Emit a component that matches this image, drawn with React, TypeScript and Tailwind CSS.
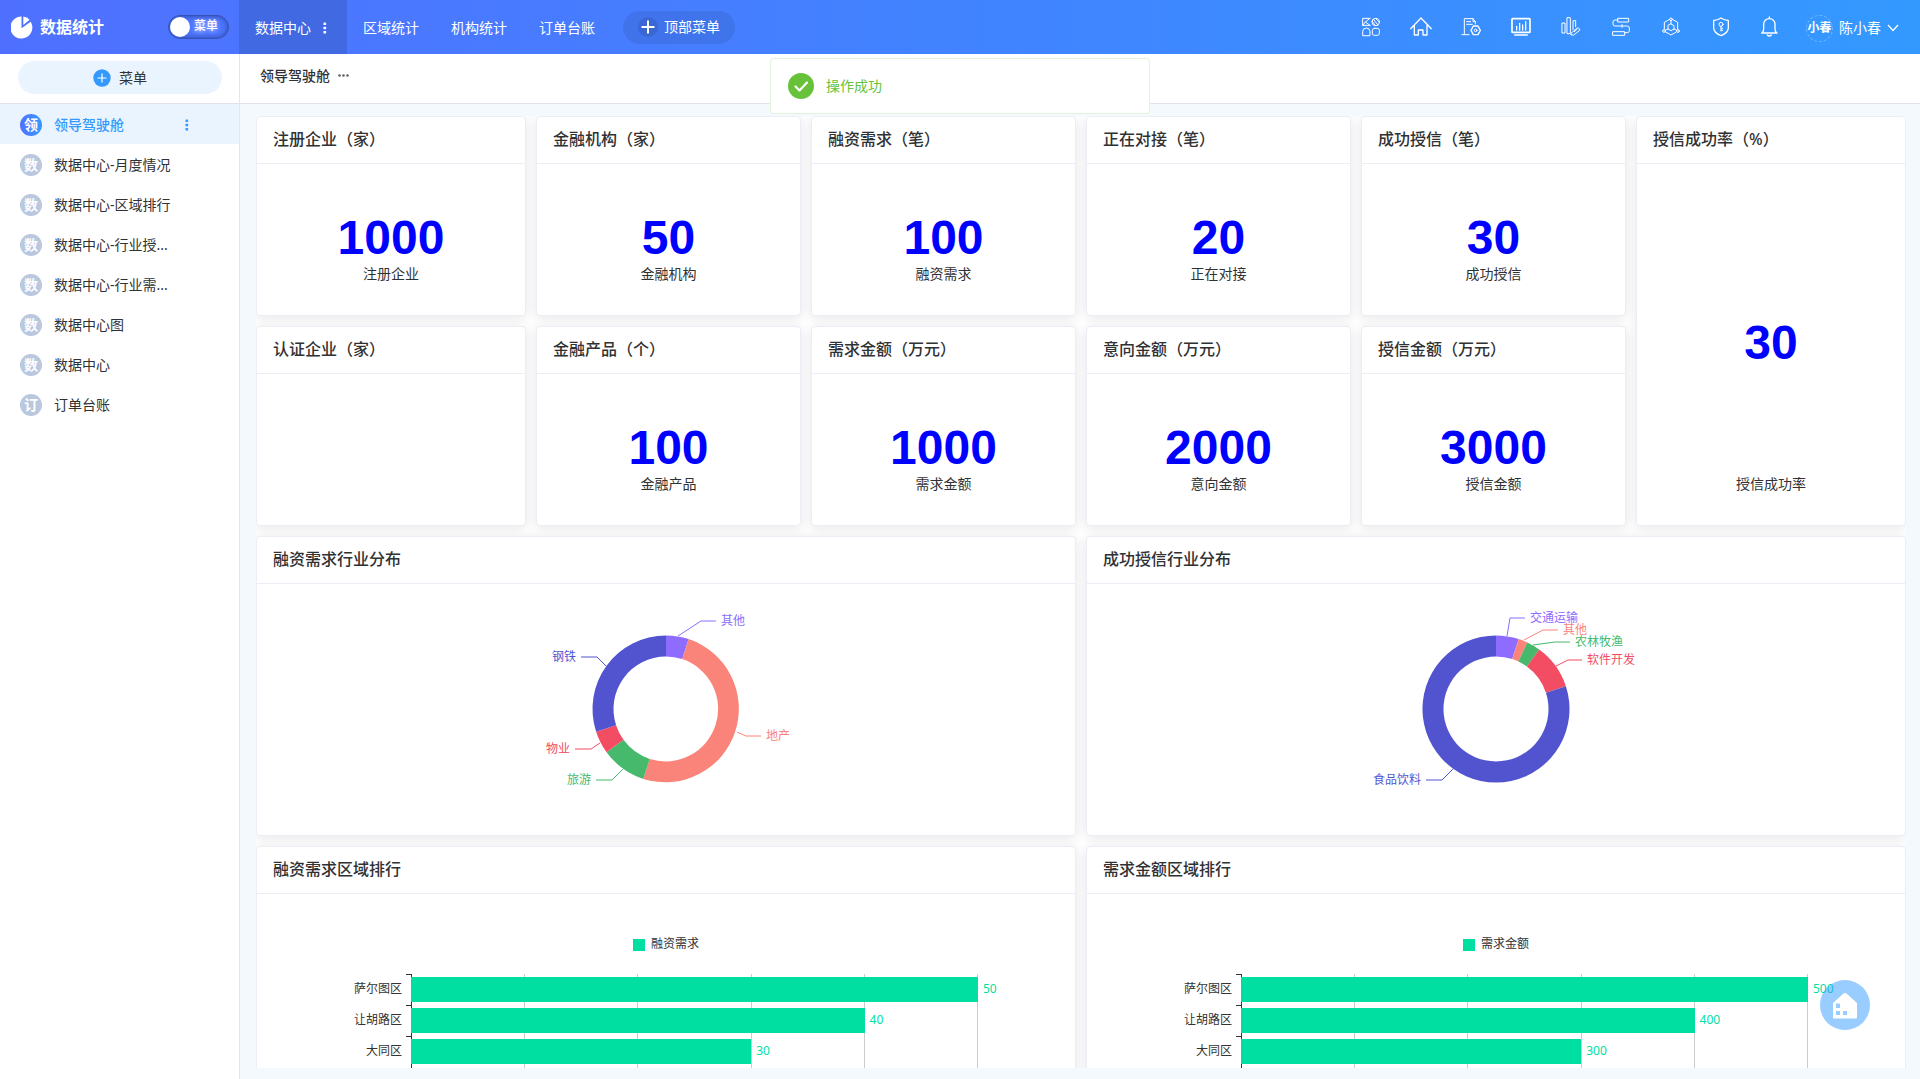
import React, { useState } from "react";

type IconName =
  | "apps"
  | "home"
  | "report"
  | "screen"
  | "design"
  | "flow"
  | "network"
  | "shield"
  | "bell";

interface Slice {
  name: string;
  percent: number;
  color: string;
  line: [number, number][];
}

interface BarItem {
  name: string;
  value: number;
}

const TOP_TABS = ["区域统计", "机构统计", "订单台账"];

const SIDE_MENU = [
  "领导驾驶舱",
  "数据中心-月度情况",
  "数据中心-区域排行",
  "数据中心-行业授...",
  "数据中心-行业需...",
  "数据中心图",
  "数据中心",
  "订单台账",
];

const TOOLS: { icon: IconName; label: string }[] = [
  { icon: "apps", label: "应用" },
  { icon: "home", label: "首页" },
  { icon: "report", label: "报表" },
  { icon: "screen", label: "大屏" },
  { icon: "design", label: "设计" },
  { icon: "flow", label: "流程" },
  { icon: "network", label: "组织" },
  { icon: "shield", label: "权限" },
  { icon: "bell", label: "消息" },
];

const STATS = [
  { title: "注册企业（家）", value: "1000", label: "注册企业" },
  { title: "金融机构（家）", value: "50", label: "金融机构" },
  { title: "融资需求（笔）", value: "100", label: "融资需求" },
  { title: "正在对接（笔）", value: "20", label: "正在对接" },
  { title: "成功授信（笔）", value: "30", label: "成功授信" },
  { title: "授信成功率（%）", value: "30", label: "授信成功率", tall: true },
  { title: "认证企业（家）", value: "", label: "" },
  { title: "金融产品（个）", value: "100", label: "金融产品" },
  { title: "需求金额（万元）", value: "1000", label: "需求金额" },
  { title: "意向金额（万元）", value: "2000", label: "意向金额" },
  { title: "授信金额（万元）", value: "3000", label: "授信金额" },
];

// line: slice edge, elbow, label end (relative to the ring centre)
const DEMAND_SLICES: Slice[] = [
  { name: "其他", percent: 5, color: "#8d6cff", line: [[12, -73], [35, -88], [50, -88]] },
  { name: "地产", percent: 50, color: "#fa8479", line: [[71, 23], [80, 27], [95, 27]] },
  { name: "旅游", percent: 10, color: "#46b96c", line: [[-43, 60], [-54, 71], [-70, 71]] },
  { name: "物业", percent: 5, color: "#f34d64", line: [[-66, 34], [-75, 40], [-91, 40]] },
  { name: "钢铁", percent: 30, color: "#5254cf", line: [[-60, -43], [-69, -52], [-85, -52]] },
];

const CREDIT_SLICES: Slice[] = [
  { name: "交通运输", percent: 5, color: "#8d6cff", line: [[11, -73], [14, -91], [29, -91]] },
  { name: "其他", percent: 2, color: "#fa8479", line: [[28, -69], [47, -79], [62, -79]] },
  { name: "农林牧渔", percent: 3, color: "#46b96c", line: [[37, -64], [59, -67], [74, -67]] },
  { name: "软件开发", percent: 10, color: "#f34d64", line: [[60, -43], [72, -49], [86, -49]] },
  { name: "食品饮料", percent: 80, color: "#5254cf", line: [[-43, 60], [-54, 71], [-70, 71]] },
];

const DEMAND_BARS: BarItem[] = [
  { name: "萨尔图区", value: 50 },
  { name: "让胡路区", value: 40 },
  { name: "大同区", value: 30 },
];

const AMOUNT_BARS: BarItem[] = [
  { name: "萨尔图区", value: 500 },
  { name: "让胡路区", value: 400 },
  { name: "大同区", value: 300 },
];

const ICON_PATHS: Record<IconName, React.ReactNode> = {
  apps: (
    <>
      <path d="M-3-26H-25V-5H-3M-3-26-17-15-3-5M-25-5l8-10" />
      <circle cx="14" cy="-15" r="11" />
      <path d="M7-23 21-6M14-26l11 12M3-17l10 12" />
      <path d="M-25 25V14a11 11 0 0 1 22 0v11z" />
      <rect x="4" y="4" width="21" height="21" rx="6" />
    </>
  ),
  home: <path strokeWidth="4" d="M-31 5 0-27 31 5M-20-5V24H-8V9H6v15H18V-5" />,
  report: (
    <>
      <path d="M-27 23H-6M-20 23V-25H6l7 9v7M6-25v9h7M-13-16H-1M-13-8H4" />
      <path d="M7-3h14l7 13-7 13H7L0 10z" strokeWidth="4" />
      <circle cx="14" cy="10" r="4" />
    </>
  ),
  screen: (
    <>
      <rect x="-27" y="-25" width="54" height="41" rx="2" strokeWidth="5" />
      <path strokeWidth="4" d="M-19 24h38M-13-2V9M-4-11V9M5-6V9M14-16V9" />
    </>
  ),
  design: (
    <>
      <path d="M-26-12h8v30h-8zM-11-28h9v48h-9zM14-1V-19H6V8M1 18 17 4q5-3 8 1t-1 7L8 24H1z" />
      <path d="m10 14 8-7" />
    </>
  ),
  flow: (
    <>
      <path d="M-9-26h32v11H-9zM-24 14H11v11h-35z" />
      <path d="M-9-21h-9q-6 0-6 6v6q0 6 6 6h37q6 0 6 6v8q0 6-6 6h-8M3-7v8" />
    </>
  ),
  network: (
    <>
      <path d="M-4-23-20-14V6M4-23l16 9V6M-16 15 0 24l16-9M0-9l9 5V6L0 11-9 6V-4zM0-18v9M-17 10l8-4M17 10 9 6" />
      <circle cy="-23" r="4" />
      <circle cx="-21" cy="12" r="4" />
      <circle cx="21" cy="12" r="4" />
    </>
  ),
  shield: (
    <>
      <path strokeWidth="4" d="M0-27q10 7 22 7V2q0 15-22 24Q-22 17-22 2v-22q12 0 22-7z" />
      <circle cy="-8" r="6" />
      <path d="M0-2v14M0 4h5M0 10h5" />
    </>
  ),
  bell: (
    <path
      strokeWidth="4"
      d="M-5-30v4M-28 18q6-3 6-12V-8a17 17 0 0 1 34 0V6q0 9 6 12zM-11 24q6 6 12 0"
    />
  ),
};

function ToolIcon({ name }: { name: IconName }) {
  return (
    <svg
      viewBox="-33 -33 66 66"
      className="size-[22px]"
      fill="none"
      stroke="currentColor"
      strokeWidth="3"
      strokeLinejoin="round"
      strokeLinecap="round"
    >
      {ICON_PATHS[name]}
    </svg>
  );
}

function Dots({ className }: { className?: string }) {
  return (
    <svg viewBox="0 0 4 12" className={className} fill="currentColor">
      <rect x="0.5" y="0.5" width="2.6" height="2.6" rx="0.6" />
      <rect x="0.5" y="4.7" width="2.6" height="2.6" rx="0.6" />
      <rect x="0.5" y="8.9" width="2.6" height="2.6" rx="0.6" />
    </svg>
  );
}

function Header() {
  const [menuOn, setMenuOn] = useState(false);

  return (
    <header className="flex h-[54px] shrink-0 items-center bg-linear-to-r from-[#4f70ff] via-[#4183ff] to-[#3399ff] text-white">
      <div className="flex h-full w-[239px] shrink-0 items-center justify-between pr-[10px] pl-[11px]">
        <div className="flex items-center gap-[6px]">
          <svg viewBox="0 0 23 23" className="size-[23px]" fill="currentColor">
            <path d="M10.5 .6V12.200l9.200-6.400A11 11 0 1 1 10.500 .6z" />
            <path d="M12.300.5a11 11 0 0 1 6.300 3.300L12.300 9z" />
          </svg>
          <span className="text-base font-bold">数据统计</span>
        </div>
        <button
          type="button"
          role="switch"
          aria-checked={menuOn}
          onClick={() => setMenuOn(!menuOn)}
          className="flex h-6 w-[61px] items-center gap-1 rounded-full border border-[#3553b4] px-px shadow-[inset_0_0_5px_#2c4496]"
        >
          <span className="size-5 rounded-full bg-white" />
          <span className="pb-[2px] text-xs font-medium text-shadow-[0_1px_4px_#ffffffb0]">菜单</span>
        </button>
      </div>

      <nav className="flex h-full items-center text-sm">
        <a href="#data" className="flex h-full w-[108px] items-center gap-3 bg-[#4169e1] pt-[2px] pl-4">
          数据中心
          <Dots className="h-3 w-1" />
        </a>
        {TOP_TABS.map((tab) => (
          <a key={tab} href="#tab" className="px-4 pt-[2px]">
            {tab}
          </a>
        ))}
        <button
          type="button"
          className="ml-3 flex h-[33px] items-center gap-[6px] rounded-full bg-black/8 px-[15px]"
        >
          <span className="flex size-5 items-center justify-center rounded-full bg-black/10">
            <svg viewBox="0 0 14 14" className="size-[14px]" stroke="currentColor" strokeWidth="2">
              <path d="M7 .5v13M.5 7h13" />
            </svg>
          </span>
          顶部菜单
        </button>
      </nav>

      <div className="ml-auto flex items-center pr-[21px]">
        <div className="flex items-center gap-7">
          {TOOLS.map((tool) => (
            <button key={tool.icon} type="button" aria-label={tool.label}>
              <ToolIcon name={tool.icon} />
            </button>
          ))}
        </div>
        <button type="button" className="ml-6 flex items-center gap-[6px] pt-[2px] text-sm">
          <span className="flex size-[27px] items-center justify-center rounded-full border border-dashed border-white/30 text-xs font-bold whitespace-nowrap">
            小春
          </span>
          陈小春
          <svg viewBox="0 0 12 8" className="h-2 w-3" fill="none" stroke="currentColor" strokeWidth="1.300">
            <path d="m1 1 5 5.500L11 1" />
          </svg>
        </button>
      </div>
    </header>
  );
}

function Sidebar() {
  return (
    <aside className="flex w-60 shrink-0 flex-col border-r border-[#e3e6ec] bg-white">
      <div className="flex h-[50px] shrink-0 border-b border-[#dfe2e8] pt-[7px] pr-[17px] pl-[18px]">
        <button
          type="button"
          className="flex h-[33px] flex-1 items-center justify-center gap-2 rounded-full bg-[#eaf4ff] text-sm text-[#303133]"
        >
          <svg viewBox="0 0 18 18" className="size-[18px]">
            <circle cx="9" cy="9" r="8.700" fill="#3399ff" />
            <path d="M9 4.500v9M4.500 9h9" stroke="#fff" strokeWidth="1.200" />
          </svg>
          菜单
        </button>
      </div>
      <nav className="flex flex-col">
        {SIDE_MENU.map((item, i) => (
          <a
            key={item}
            href="#page"
            className={
              i === 0
                ? "flex h-10 items-center gap-3 bg-[#eaf4ff] pt-[2px] pr-[50px] pl-5 text-sm font-medium text-[#3399ff]"
                : "flex h-10 items-center gap-3 pt-[2px] pr-[50px] pl-5 text-sm text-[#303133]"
            }
          >
            <span
              className={
                i === 0
                  ? "flex size-[22px] items-center justify-center rounded-full bg-linear-to-r from-[#4f70ff] to-[#3399ff] font-bold text-white"
                  : "flex size-[22px] items-center justify-center rounded-full bg-[#b9c8de] font-bold text-white"
              }
            >
              {item[0]}
            </span>
            {item}
            {i === 0 && <Dots className="ml-auto h-3 w-1" />}
          </a>
        ))}
      </nav>
    </aside>
  );
}

function Card({
  title,
  className,
  children,
}: {
  title: string;
  className: string;
  children?: React.ReactNode;
}) {
  return (
    <section
      className={`flex flex-col rounded border border-[#ebeef5] bg-white shadow-[0_2px_12px_0_rgba(0,0,0,0.1)] ${className}`}
    >
      <h2 className="h-[47px] shrink-0 border-b border-[#ebeef5] px-4 text-base leading-[45px] font-medium text-[#303133]">
        {title}
      </h2>
      {children}
    </section>
  );
}

function polar(angle: number, radius: number) {
  const rad = ((angle - 90) * Math.PI) / 180;
  return `${(Math.cos(rad) * radius).toFixed(2)} ${(Math.sin(rad) * radius).toFixed(2)}`;
}

function ringPath(start: number, end: number) {
  const outer = 73.5;
  const inner = 52.5;
  const large = end - start > 180 ? 1 : 0;
  return `M${polar(start, outer)}A${outer} ${outer} 0 ${large} 1 ${polar(end, outer)}L${polar(
    end,
    inner
  )}A${inner} ${inner} 0 ${large} 0 ${polar(start, inner)}Z`;
}

function RingChart({ slices }: { slices: Slice[] }) {
  let angle = 0;

  return (
    <div className="flex flex-1 items-center justify-center pb-[2px]">
      <svg viewBox="-150 -120 300 240" className="h-60 w-[300px] text-xs">
        {slices.map((s) => {
          const start = angle;
          angle += s.percent * 3.6;
          const [, elbow, end] = s.line;
          const right = end[0] > elbow[0];
          return (
            <g key={s.name} fill={s.color}>
              <path d={ringPath(start, angle)} />
              <polyline points={s.line.join(" ")} fill="none" stroke={s.color} />
              <text x={right ? end[0] + 5 : end[0] - 5} y={end[1] + 4} textAnchor={right ? "start" : "end"}>
                {s.name}
              </text>
            </g>
          );
        })}
      </svg>
    </div>
  );
}

function BarChart({ legend, items, max }: { legend: string; items: BarItem[]; max: number }) {
  return (
    <div className="flex flex-col pt-[42px] text-xs text-[#333]">
      <div className="flex h-[18px] items-center justify-center gap-[6px]">
        <span className="size-3 bg-[#00dfa2]" />
        <span className="pb-[2px]">{legend}</span>
      </div>
      <div className="relative mt-5 mr-[97px] ml-[154px] border-l border-[#333] pb-10">
        <div className="absolute inset-0 grid grid-cols-5">
          {[1, 2, 3, 4, 5].map((n) => (
            <span key={n} className="border-r border-[#ccc]" />
          ))}
        </div>
        {items.map((item) => (
          <div key={item.name} className="relative -ml-px flex h-[31px] items-center">
            <span className="absolute top-0 right-full w-[5px] border-t border-[#333]" />
            <span className="absolute right-full mr-[9px] pb-[2px] whitespace-nowrap">{item.name}</span>
            <div className="h-[25px] bg-[#00dfa2]" style={{ width: `${(item.value / max) * 100}%` }} />
            <span className="-mr-10 pb-[2px] pl-[5px] text-[#00dfa2]">{item.value}</span>
          </div>
        ))}
      </div>
    </div>
  );
}

function Toast() {
  return (
    <div
      role="alert"
      className="absolute top-[58px] left-1/2 flex h-14 w-[380px] -translate-x-1/2 items-center gap-3 rounded border border-[#e1f3d8] bg-white/98 px-[17px] text-sm text-[#67c23a]"
    >
      <svg viewBox="0 0 26 26" className="size-[26px]">
        <circle cx="13" cy="13" r="13" fill="#67c23a" />
        <path
          d="m7.500 13.500 4 4 7.500-8"
          fill="none"
          stroke="#fff"
          strokeWidth="2.200"
          strokeLinecap="round"
          strokeLinejoin="round"
        />
      </svg>
      操作成功
    </div>
  );
}

export default function App() {
  return (
    <div className="relative flex h-screen flex-col overflow-hidden bg-[#f4f9fd] font-['Noto_Sans','Noto_Sans_CJK_SC',sans-serif]">
      <Header />
      <div className="flex min-h-0 flex-1">
        <Sidebar />
        <main className="flex min-w-0 flex-1 flex-col">
          <div className="flex h-[50px] shrink-0 items-center gap-2 border-b border-[#dfe2e8] bg-white px-5 pb-[6px]">
            <h1 className="text-sm font-medium text-[#303133]">领导驾驶舱</h1>
            <button type="button" aria-label="更多" className="text-[#606266]">
              <svg viewBox="0 0 11 3" className="h-[3px] w-[11px]" fill="currentColor">
                <circle cx="1.500" cy="1.500" r="1.300" />
                <circle cx="5.500" cy="1.500" r="1.300" />
                <circle cx="9.500" cy="1.500" r="1.300" />
              </svg>
            </button>
          </div>

          <div className="mt-3 mr-[14px] mb-[11px] ml-4 flex min-h-0 flex-1 flex-col gap-[10px] overflow-hidden bg-white">
            <div className="grid shrink-0 grid-cols-[270fr_265fr_265fr_265fr_265fr_270fr] gap-[10px]">
              {STATS.map((stat) => (
                <Card
                  key={stat.title}
                  title={stat.title}
                  className={stat.tall ? "row-span-2" : "h-[200px]"}
                >
                  {stat.value && (
                    <div className="flex flex-1 flex-col items-center pt-[47px] pb-[31px]">
                      <strong className="flex flex-1 items-center font-['Liberation_Sans',Arial,sans-serif] text-5xl text-[#0000ff]">
                        {stat.value}
                      </strong>
                      <span className="text-sm text-[#303133]">{stat.label}</span>
                    </div>
                  )}
                </Card>
              ))}
            </div>

            <div className="grid shrink-0 grid-cols-2 gap-[10px]">
              <Card title="融资需求行业分布" className="h-[300px]">
                <RingChart slices={DEMAND_SLICES} />
              </Card>
              <Card title="成功授信行业分布" className="h-[300px]">
                <RingChart slices={CREDIT_SLICES} />
              </Card>
              <Card title="融资需求区域排行" className="h-[300px]">
                <BarChart legend="融资需求" items={DEMAND_BARS} max={50} />
              </Card>
              <Card title="需求金额区域排行" className="h-[300px]">
                <BarChart legend="需求金额" items={AMOUNT_BARS} max={500} />
              </Card>
            </div>
          </div>
        </main>
      </div>

      <Toast />

      <button
        type="button"
        aria-label="返回首页"
        className="absolute right-[50px] bottom-[49px] flex size-[50px] items-center justify-center rounded-full bg-[#3399ff]/50 text-white"
      >
        <svg viewBox="0 0 26 27" className="h-[27px] w-[26px]" fill="currentColor" fillRule="evenodd">
          <path d="M1 11 11.500 1.500q1.500-1.200 3 0L25 11v14.500q0 1-1 1H2q-1 0-1-1zM4 11.500v4.500h4v-4.500zM4 19v4h4v-4zM11 19v4h4v-4z" />
        </svg>
      </button>
    </div>
  );
}
